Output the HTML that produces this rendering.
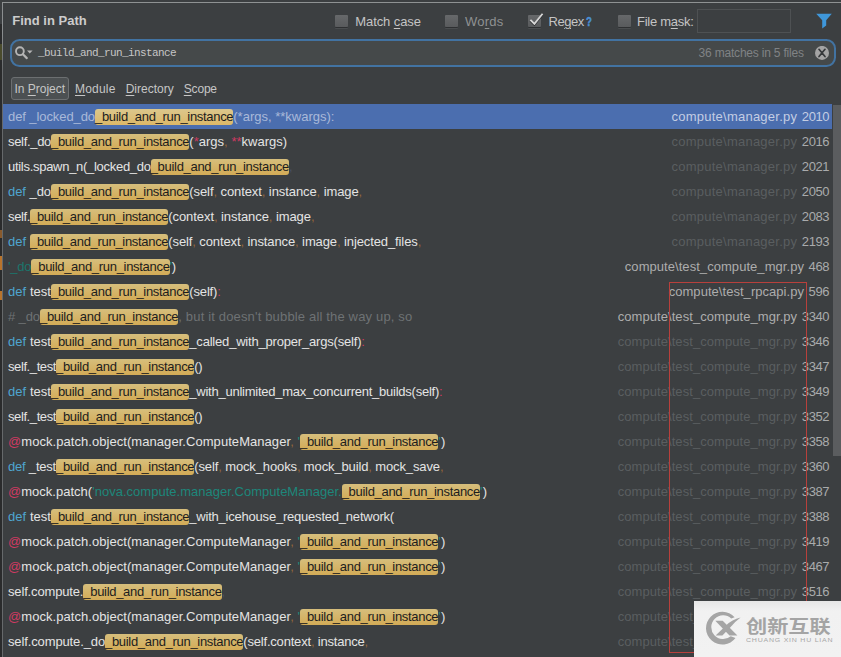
<!DOCTYPE html>
<html lang="en">
<head>
<meta charset="utf-8">
<title>Find in Path</title>
<style>
*{margin:0;padding:0;box-sizing:border-box}
html,body{width:841px;height:657px;overflow:hidden;background:#3c3f41}
body{position:relative;font-family:"Liberation Sans",sans-serif;font-size:13px;color:#c4c4c4;line-height:15px}
.abs{position:absolute;white-space:pre}
.bl{position:absolute;left:2px;top:2px;width:1px;height:655px;background:linear-gradient(#8b8e90,#8b8e90 30px,#66696b 70px,#66696b)}
.bt{position:absolute;left:2px;top:2px;width:839px;height:1px;background:#8f9293}
.title{left:12.3px;top:13px;font-weight:bold;color:#cccccc}
.cb{position:absolute;top:15px;width:13px;height:12px;background:linear-gradient(#66686a,#595b5d);border-radius:1px;box-shadow:0 1px 0 #2e3032,0 2px 0 #4a4d4f}
.lbl{top:14px}
.dis{color:#8f9192}
u{text-decoration:underline;text-decoration-thickness:1px;text-underline-offset:1.5px}
.search{position:absolute;left:9.5px;top:39.4px;width:826.5px;height:27.4px;border:2px solid #4273a2;border-radius:9.5px;background:#45494a}
.stext{left:38px;top:45.9px;font:11px "Liberation Mono",monospace;letter-spacing:-0.6px;color:#c6c6c6;line-height:15px}
.matches{top:46px;font-size:12px;color:#808385}
.tabsel{position:absolute;left:11px;top:77px;width:58px;height:23px;border:1px solid #6c6f71;border-radius:3px;background:#4c5052}
.tab{top:82.4px;font-size:12px;color:#c6c6c6}
.row{position:absolute;left:3px;width:829px;height:25px}
.row.sel{background:#4b6eaf}
.row .t,.row .hl{position:absolute;top:0;line-height:25px;white-space:pre;margin-left:-3px}
.row .hl{top:4.5px;height:16.5px;line-height:16px;border-radius:3px;background:linear-gradient(#d6be7c,#d3ab56);color:#1d1d1d;overflow:visible}
.row.sel .hl{background:linear-gradient(#dcc78c,#dcb868)}
.hl{letter-spacing:-0.304px;width:138.3px}
</style>
</head>
<body>
<div class="abs" style="left:0;top:24px;width:2px;height:633px;background:#2a2b2c"></div><div class="abs" style="left:0;top:44px;width:2px;height:16px;background:#4a4b2c"></div><div class="abs" style="left:0;top:256px;width:2px;height:14px;background:#b8742c"></div><div class="abs" style="left:0;top:291px;width:2px;height:9px;background:#b8742c"></div><div class="abs" style="left:0;top:230px;width:2px;height:8px;background:#8a5a2c"></div>
<div class="bl"></div><div class="bt"></div>
<div class="abs title">Find in Path</div>

<div class="cb" style="left:335px"></div>
<div class="abs lbl" style="left:355.3px;letter-spacing:-0.09px">Match <u>c</u>ase</div>
<div class="cb" style="left:445px"></div>
<div class="abs lbl dis" style="left:465px;letter-spacing:0.24px">Wo<u>r</u>ds</div>
<div class="cb" style="left:528px"></div>
<svg class="abs" style="left:527px;top:11px" width="18" height="18" viewBox="0 0 18 18"><path d="M4 10.4 L7.4 13.8 L15 4.2" fill="none" stroke="#2a2c2e" stroke-width="2" stroke-linecap="square"/><path d="M4 9.4 L7.4 12.8 L15 3.4" fill="none" stroke="#d6d6d6" stroke-width="1.8" stroke-linecap="square"/></svg>
<div class="abs lbl" style="left:548.6px;letter-spacing:-0.5px">Re<u>g</u>ex</div>
<div class="abs lbl" style="left:585.6px;font-weight:bold;color:#4a8fd3;-webkit-text-stroke:0.5px #4a8fd3;transform:scaleX(0.74);transform-origin:0 0">?</div>
<div class="cb" style="left:617.5px"></div>
<div class="abs lbl" style="left:637px;letter-spacing:-0.27px">File m<u>a</u>sk:</div>
<div class="abs" style="left:697px;top:9px;width:94px;height:24px;border:1px solid #4e5153;background:#3c3f41"></div>
<svg class="abs" style="left:816px;top:13px" width="17" height="17" viewBox="0 0 17 17"><path d="M0.2 0.8 H15.8 L10.2 7.2 V12.6 L6.2 15.6 V7.2 Z" fill="#3f97da"/></svg>

<div class="search"></div>
<svg class="abs" style="left:13px;top:44px" width="22" height="18" viewBox="0 0 22 18"><circle cx="6.9" cy="7.2" r="3.9" fill="none" stroke="#b4b4b4" stroke-width="1.9"/><path d="M9.9 10.3 L13.8 14.1" stroke="#b4b4b4" stroke-width="2.2" stroke-linecap="round"/><path d="M14 6.5 H19.6 L16.8 9.6 Z" fill="#b4b4b4"/></svg>
<div class="abs stext">_build_and_run_instance</div>
<div class="abs matches" style="left:698.6px;letter-spacing:-0.2px">36 matches in 5 files</div>
<svg class="abs" style="left:815px;top:46px" width="15" height="15" viewBox="0 0 15 15"><circle cx="7" cy="6.9" r="7" fill="#a4a4a4"/><path d="M4 3.3 L10 10.5 M10 3.3 L4 10.5" stroke="#36393b" stroke-width="1.7" stroke-linecap="round"/></svg>

<div class="tabsel"></div>
<div class="abs tab" style="left:14.4px">In <u>P</u>roject</div>
<div class="abs tab" style="left:75px;letter-spacing:0.2px"><u>M</u>odule</div>
<div class="abs tab" style="left:125.7px"><u>D</u>irectory</div>
<div class="abs tab" style="left:183.8px;letter-spacing:-0.2px"><u>S</u>cope</div>

<div class="row sel" style="top:104px"><span class="t" style="left:8.0px;letter-spacing:-0.085px;color:#a9b9d9">def _locked_do</span><span class="hl" style="left:95px">_build_and_run_instance</span><span class="t" style="left:233.3px;letter-spacing:-0.002px;color:#a9b9d9">(*args, **kwargs):</span><span class="t" style="left:671.5px;letter-spacing:0.239px;color:#c3cde3">compute\manager.py</span><span class="t" style="left:801.8px;letter-spacing:-0.38px;color:#c3cde3">2010</span></div>
<div class="row" style="top:129px"><span class="t" style="left:8.0px;letter-spacing:-0.318px;color:#e4e4e4">self._do</span><span class="hl" style="left:51px">_build_and_run_instance</span><span class="t" style="left:189.3px;letter-spacing:0.016px;color:#e4e4e4">(<span style="color:#cf3a62">*</span>args<span style="color:#94663a">,</span> <span style="color:#cf3a62">*</span><span style="color:#cf3a62">*</span>kwargs)</span><span class="t" style="left:671.5px;letter-spacing:0.239px;color:#5a5e60">compute\manager.py</span><span class="t" style="left:801.8px;letter-spacing:-0.38px;color:#a9abac">2016</span></div>
<div class="row" style="top:154px"><span class="t" style="left:8.0px;letter-spacing:-0.288px;color:#e4e4e4">utils.spawn_n(_locked_do</span><span class="hl" style="left:150.7px">_build_and_run_instance</span><span class="t" style="left:289.0px;letter-spacing:0px;color:#e4e4e4"><span style="color:#4a5060">,</span></span><span class="t" style="left:671.5px;letter-spacing:0.239px;color:#5a5e60">compute\manager.py</span><span class="t" style="left:801.8px;letter-spacing:-0.38px;color:#a9abac">2021</span></div>
<div class="row" style="top:179px"><span class="t" style="left:8.0px;letter-spacing:-0.054px;color:#e4e4e4"><span style="color:#4fa5cf">def </span>_do</span><span class="hl" style="left:51px">_build_and_run_instance</span><span class="t" style="left:189.3px;letter-spacing:-0.087px;color:#e4e4e4">(self<span style="color:#94663a">,</span> context<span style="color:#94663a">,</span> instance<span style="color:#94663a">,</span> image<span style="color:#94663a">,</span></span><span class="t" style="left:671.5px;letter-spacing:0.239px;color:#5a5e60">compute\manager.py</span><span class="t" style="left:801.8px;letter-spacing:-0.38px;color:#a9abac">2050</span></div>
<div class="row" style="top:204px"><span class="t" style="left:8.0px;letter-spacing:-0.369px;color:#e4e4e4">self.</span><span class="hl" style="left:30px">_build_and_run_instance</span><span class="t" style="left:168.3px;letter-spacing:-0.078px;color:#e4e4e4">(context<span style="color:#94663a">,</span> instance<span style="color:#94663a">,</span> image<span style="color:#94663a">,</span></span><span class="t" style="left:671.5px;letter-spacing:0.239px;color:#5a5e60">compute\manager.py</span><span class="t" style="left:801.8px;letter-spacing:-0.38px;color:#a9abac">2083</span></div>
<div class="row" style="top:229px"><span class="t" style="left:8.0px;letter-spacing:0.078px;color:#e4e4e4"><span style="color:#4fa5cf">def </span></span><span class="hl" style="left:30px">_build_and_run_instance</span><span class="t" style="left:168.3px;letter-spacing:-0.108px;color:#e4e4e4">(self<span style="color:#94663a">,</span> context<span style="color:#94663a">,</span> instance<span style="color:#94663a">,</span> image<span style="color:#94663a">,</span> injected_files<span style="color:#94663a">,</span></span><span class="t" style="left:671.5px;letter-spacing:0.239px;color:#5a5e60">compute\manager.py</span><span class="t" style="left:801.8px;letter-spacing:-0.38px;color:#a9abac">2193</span></div>
<div class="row" style="top:254px"><span class="t" style="left:8.0px;letter-spacing:-0.218px;color:#e4e4e4"><span style="color:#1b756c">&#x27;_do</span></span><span class="hl" style="left:31.3px">_build_and_run_instance</span><span class="t" style="left:169.6px;letter-spacing:-0.356px;color:#e4e4e4"><span style="color:#1d877b">&#x27;</span>)</span><span class="t" style="left:624.8px;letter-spacing:0.053px;color:#adadad">compute\test_compute_mgr.py</span><span class="t" style="left:808.6px;letter-spacing:-0.368px;color:#a9abac">468</span></div>
<div class="row" style="top:279px"><span class="t" style="left:8.0px;letter-spacing:0.045px;color:#e4e4e4"><span style="color:#4fa5cf">def </span>test</span><span class="hl" style="left:51px">_build_and_run_instance</span><span class="t" style="left:189.3px;letter-spacing:-0.157px;color:#e4e4e4">(self)<span style="color:#cf3a62">:</span></span><span class="t" style="left:668.7px;letter-spacing:0.041px;color:#adadad">compute\test_rpcapi.py</span><span class="t" style="left:808.6px;letter-spacing:-0.368px;color:#a9abac">596</span></div>
<div class="row" style="top:304px"><span class="t" style="left:8.0px;letter-spacing:-0.109px;color:#e4e4e4"><span style="color:#6e7274"># _do</span></span><span class="hl" style="left:40px">_build_and_run_instance</span><span class="t" style="left:178.3px;letter-spacing:0.163px;color:#e4e4e4"><span style="color:#6e7274">, but it doesn&#x27;t bubble all the way up, so</span></span><span class="t" style="left:617.7px;letter-spacing:0.064px;color:#adadad">compute\test_compute_mgr.py</span><span class="t" style="left:801.8px;letter-spacing:-0.38px;color:#a9abac">3340</span></div>
<div class="row" style="top:329px"><span class="t" style="left:8.0px;letter-spacing:0.045px;color:#e4e4e4"><span style="color:#4fa5cf">def </span>test</span><span class="hl" style="left:51px">_build_and_run_instance</span><span class="t" style="left:189.3px;letter-spacing:-0.193px;color:#e4e4e4">_called_with_proper_args(self)<span style="color:#cf3a62">:</span></span><span class="t" style="left:617.7px;letter-spacing:0.064px;color:#5a5e60">compute\test_compute_mgr.py</span><span class="t" style="left:801.8px;letter-spacing:-0.38px;color:#a9abac">3346</span></div>
<div class="row" style="top:354px"><span class="t" style="left:8.0px;letter-spacing:-0.403px;color:#e4e4e4">self._test</span><span class="hl" style="left:56px">_build_and_run_instance</span><span class="t" style="left:194.3px;letter-spacing:-0.286px;color:#e4e4e4">()</span><span class="t" style="left:617.7px;letter-spacing:0.064px;color:#5a5e60">compute\test_compute_mgr.py</span><span class="t" style="left:801.8px;letter-spacing:-0.38px;color:#a9abac">3347</span></div>
<div class="row" style="top:379px"><span class="t" style="left:8.0px;letter-spacing:0.045px;color:#e4e4e4"><span style="color:#4fa5cf">def </span>test</span><span class="hl" style="left:51px">_build_and_run_instance</span><span class="t" style="left:189.3px;letter-spacing:-0.242px;color:#e4e4e4">_with_unlimited_max_concurrent_builds(self)<span style="color:#cf3a62">:</span></span><span class="t" style="left:617.7px;letter-spacing:0.064px;color:#5a5e60">compute\test_compute_mgr.py</span><span class="t" style="left:801.8px;letter-spacing:-0.38px;color:#a9abac">3349</span></div>
<div class="row" style="top:404px"><span class="t" style="left:8.0px;letter-spacing:-0.403px;color:#e4e4e4">self._test</span><span class="hl" style="left:56px">_build_and_run_instance</span><span class="t" style="left:194.3px;letter-spacing:-0.286px;color:#e4e4e4">()</span><span class="t" style="left:617.7px;letter-spacing:0.064px;color:#5a5e60">compute\test_compute_mgr.py</span><span class="t" style="left:801.8px;letter-spacing:-0.38px;color:#a9abac">3352</span></div>
<div class="row" style="top:429px"><span class="t" style="left:8.0px;letter-spacing:0.055px;color:#e4e4e4"><span style="color:#cf3a62">@</span>mock.patch.object(manager.ComputeManager<span style="color:#94663a">,</span> <span style="color:#1d877b">&#x27;</span></span><span class="hl" style="left:300px">_build_and_run_instance</span><span class="t" style="left:438.3px;letter-spacing:0.294px;color:#e4e4e4"><span style="color:#1d877b">&#x27;</span>)</span><span class="t" style="left:617.7px;letter-spacing:0.064px;color:#5a5e60">compute\test_compute_mgr.py</span><span class="t" style="left:801.8px;letter-spacing:-0.38px;color:#a9abac">3358</span></div>
<div class="row" style="top:454px"><span class="t" style="left:8.0px;letter-spacing:-0.208px;color:#e4e4e4"><span style="color:#4fa5cf">def </span>_test</span><span class="hl" style="left:56px">_build_and_run_instance</span><span class="t" style="left:194.3px;letter-spacing:-0.128px;color:#e4e4e4">(self<span style="color:#94663a">,</span> mock_hooks<span style="color:#94663a">,</span> mock_build<span style="color:#94663a">,</span> mock_save<span style="color:#94663a">,</span></span><span class="t" style="left:617.7px;letter-spacing:0.064px;color:#5a5e60">compute\test_compute_mgr.py</span><span class="t" style="left:801.8px;letter-spacing:-0.38px;color:#a9abac">3360</span></div>
<div class="row" style="top:479px"><span class="t" style="left:8.0px;letter-spacing:0.016px;color:#e4e4e4"><span style="color:#cf3a62">@</span>mock.patch(<span style="color:#1d877b">&#x27;nova.compute.manager.ComputeManager.</span></span><span class="hl" style="left:341.7px">_build_and_run_instance</span><span class="t" style="left:480.0px;letter-spacing:0.294px;color:#e4e4e4"><span style="color:#1d877b">&#x27;</span>)</span><span class="t" style="left:617.7px;letter-spacing:0.064px;color:#5a5e60">compute\test_compute_mgr.py</span><span class="t" style="left:801.8px;letter-spacing:-0.38px;color:#a9abac">3387</span></div>
<div class="row" style="top:504px"><span class="t" style="left:8.0px;letter-spacing:0.045px;color:#e4e4e4"><span style="color:#4fa5cf">def </span>test</span><span class="hl" style="left:51px">_build_and_run_instance</span><span class="t" style="left:189.3px;letter-spacing:-0.214px;color:#e4e4e4">_with_icehouse_requested_network(</span><span class="t" style="left:617.7px;letter-spacing:0.064px;color:#5a5e60">compute\test_compute_mgr.py</span><span class="t" style="left:801.8px;letter-spacing:-0.38px;color:#a9abac">3388</span></div>
<div class="row" style="top:529px"><span class="t" style="left:8.0px;letter-spacing:0.055px;color:#e4e4e4"><span style="color:#cf3a62">@</span>mock.patch.object(manager.ComputeManager<span style="color:#94663a">,</span> <span style="color:#1d877b">&#x27;</span></span><span class="hl" style="left:300px">_build_and_run_instance</span><span class="t" style="left:438.3px;letter-spacing:0.294px;color:#e4e4e4"><span style="color:#1d877b">&#x27;</span>)</span><span class="t" style="left:617.7px;letter-spacing:0.064px;color:#5a5e60">compute\test_compute_mgr.py</span><span class="t" style="left:801.8px;letter-spacing:-0.38px;color:#a9abac">3419</span></div>
<div class="row" style="top:554px"><span class="t" style="left:8.0px;letter-spacing:0.055px;color:#e4e4e4"><span style="color:#cf3a62">@</span>mock.patch.object(manager.ComputeManager<span style="color:#94663a">,</span> <span style="color:#1d877b">&#x27;</span></span><span class="hl" style="left:300px">_build_and_run_instance</span><span class="t" style="left:438.3px;letter-spacing:0.294px;color:#e4e4e4"><span style="color:#1d877b">&#x27;</span>)</span><span class="t" style="left:617.7px;letter-spacing:0.064px;color:#5a5e60">compute\test_compute_mgr.py</span><span class="t" style="left:801.8px;letter-spacing:-0.38px;color:#a9abac">3467</span></div>
<div class="row" style="top:579px"><span class="t" style="left:8.0px;letter-spacing:-0.156px;color:#e4e4e4">self.compute.</span><span class="hl" style="left:83.3px">_build_and_run_instance</span><span class="t" style="left:221.6px;letter-spacing:0px;color:#e4e4e4"><span style="color:#4a5060">,</span></span><span class="t" style="left:617.7px;letter-spacing:0.064px;color:#5a5e60">compute\test_compute_mgr.py</span><span class="t" style="left:801.8px;letter-spacing:-0.38px;color:#a9abac">3516</span></div>
<div class="row" style="top:604px"><span class="t" style="left:8.0px;letter-spacing:0.055px;color:#e4e4e4"><span style="color:#cf3a62">@</span>mock.patch.object(manager.ComputeManager<span style="color:#94663a">,</span> <span style="color:#1d877b">&#x27;</span></span><span class="hl" style="left:300px">_build_and_run_instance</span><span class="t" style="left:438.3px;letter-spacing:0.294px;color:#e4e4e4"><span style="color:#1d877b">&#x27;</span>)</span><span class="t" style="left:617.7px;letter-spacing:0.064px;color:#5a5e60">compute\test_compute_mgr.py</span><span class="t" style="left:801.8px;letter-spacing:-0.38px;color:#a9abac">3520</span></div>
<div class="row" style="top:629px"><span class="t" style="left:8.0px;letter-spacing:-0.126px;color:#e4e4e4">self.compute._do</span><span class="hl" style="left:105px">_build_and_run_instance</span><span class="t" style="left:243.3px;letter-spacing:-0.193px;color:#e4e4e4">(self.context<span style="color:#94663a">,</span> instance<span style="color:#94663a">,</span></span><span class="t" style="left:617.7px;letter-spacing:0.064px;color:#5a5e60">compute\test_compute_mgr.py</span><span class="t" style="left:801.8px;letter-spacing:-0.38px;color:#a9abac">3525</span></div>
<div class="abs" style="left:833px;top:105px;width:8px;height:350.5px;background:#5b5d5f"></div>
<div class="abs" style="left:669px;top:282px;width:138px;height:371px;border:1.3px solid #b8403c"></div>
<div class="abs" style="left:694px;top:601px;width:147px;height:56px;background:linear-gradient(#e6e6e6,#f1f1f1 10px,#f2f2f2)"></div>
<svg class="abs" style="left:700px;top:606px" width="46" height="44" viewBox="0 0 46 44"><path d="M34.6 11.2 A16.4 16.4 0 1 0 35.5 32.07 L30.77 30.23 A11.85 11.85 0 1 1 31.23 12.49 Z" fill="#a5a5a5"/><path d="M15.3 14.8 H22.7 L37.4 29.4 H29.5 Z" fill="#a5a5a5"/><path d="M15.6 29.4 H22.4 L30.2 21.5 Q35 15.5 40.6 11.5 Q32 13.5 26 19.4 Z" fill="#a5a5a5"/></svg>
<div class="abs" id="cn" style="left:746.2px;top:615.4px;font:700 18px/24px 'Liberation Sans','Noto Sans CJK SC',sans-serif;color:#a4a4a4;letter-spacing:0;transform:scaleX(1.175);transform-origin:0 0">创新互联</div>
<div class="abs" id="en" style="left:746px;top:637.2px;font:5.5px/7px 'Liberation Sans',sans-serif;color:#a6a6a6;letter-spacing:0.61px;transform:scaleX(1.27);transform-origin:0 0">CHUANG XIN HU LIAN</div>
</body>
</html>
